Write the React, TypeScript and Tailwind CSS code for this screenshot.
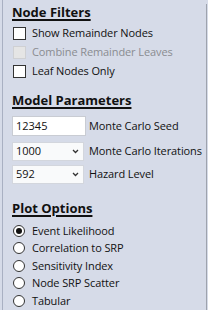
import React from "react";

const font = { fontFamily: '"Open Sans", "Noto Sans", sans-serif' };

function Heading({ children, className = "" }: { children: React.ReactNode; className?: string }) {
  return (
    <div className={`h-[18px] flex items-center text-[13px] font-bold text-[#111] underline underline-offset-[2px] decoration-[1.5px] ${className}`}>
      {children}
    </div>
  );
}

function Check({ label, disabled = false }: { label: string; disabled?: boolean }) {
  return (
    <div className="h-[19px] flex items-center gap-[6px] pl-[1px]">
      <div
        className={
          disabled
            ? "w-[13px] h-[13px] bg-[#e5e5e5] border border-[#cfd0d3]"
            : "w-[13px] h-[13px] bg-white border border-[#333]"
        }
      />
      <span className={`text-[11px] tracking-[-0.1px] ${disabled ? "text-[#8a8c91]" : "text-[#111]"}`}>{label}</span>
    </div>
  );
}

function Radio({ label, checked = false }: { label: string; checked?: boolean }) {
  return (
    <div className="h-[17.5px] flex items-center gap-[7px] pl-[1px]">
      <div className="w-[12px] h-[12px] rounded-full bg-white border border-[#333] flex items-center justify-center">
        {checked && <div className="w-[6px] h-[6px] rounded-full bg-[#111]" />}
      </div>
      <span className="text-[11px] tracking-[-0.1px] text-[#111]">{label}</span>
    </div>
  );
}

function Chevron() {
  return (
    <svg width="7" height="5" viewBox="0 0 7 5" className="text-[#333]">
      <path d="M1 1 L3.5 3.5 L6 1" stroke="currentColor" strokeWidth="1.3" fill="none" />
    </svg>
  );
}

export default function App() {
  return (
    <div
      className="w-[208px] h-[310px] bg-[#d6dbe8] relative overflow-hidden"
      style={font}
    >
      <div className="absolute left-[2px] top-0 bottom-0 w-[1px] bg-[#a9b0c2]" />
      <div className="absolute right-[1px] top-[4px] bottom-0 w-[1px] bg-[#9ea3ad]" />
      <div className="pl-[12px] pt-[4px] flex flex-col">
        <Heading>Node Filters</Heading>
        <div className="mt-[2px] flex flex-col">
          <Check label="Show Remainder Nodes" />
          <Check label="Combine Remainder Leaves" disabled />
          <Check label="Leaf Nodes Only" />
        </div>
        <Heading className="mt-[11px]">Model Parameters</Heading>
        <div className="mt-[6px] flex items-center gap-[3px]">
          <div className="w-[74px] h-[20px] bg-white border border-[#c9ccd3] flex items-center pl-[3px] text-[11px] text-[#111]">
            12345
          </div>
          <span className="text-[11px] tracking-[-0.1px] text-[#111]">Monte Carlo Seed</span>
        </div>
        <div className="mt-[6px] flex items-center gap-[5px]">
          <div className="w-[72px] h-[19px] bg-[#f9fafb] border border-[#d3d6dd] flex items-center justify-between pl-[3px] pr-[4px] text-[11px] text-[#111]">
            <span>1000</span>
            <Chevron />
          </div>
          <span className="text-[11px] tracking-[-0.1px] text-[#111]">Monte Carlo Iterations</span>
        </div>
        <div className="mt-[4px] flex items-center gap-[5px]">
          <div className="w-[72px] h-[19px] bg-[#f9fafb] border border-[#d3d6dd] flex items-center justify-between pl-[3px] pr-[4px] text-[11px] text-[#111]">
            <span>592</span>
            <Chevron />
          </div>
          <span className="text-[11px] tracking-[-0.1px] text-[#111]">Hazard Level</span>
        </div>
        <Heading className="mt-[16px]">Plot Options</Heading>
        <div className="mt-[4px] flex flex-col">
          <Radio label="Event Likelihood" checked />
          <Radio label="Correlation to SRP" />
          <Radio label="Sensitivity Index" />
          <Radio label="Node SRP Scatter" />
          <Radio label="Tabular" />
        </div>
      </div>
    </div>
  );
}
